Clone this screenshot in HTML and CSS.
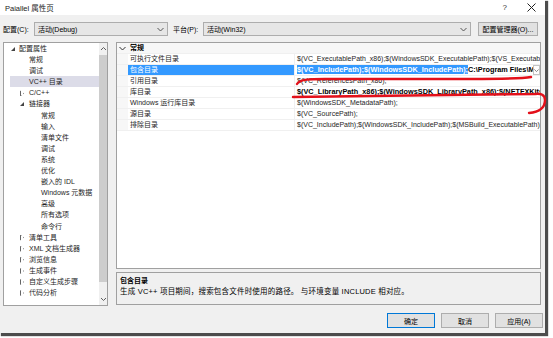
FILE: index.html
```html
<!DOCTYPE html>
<html lang="zh-CN">
<head>
    <meta charset="UTF-8">
    <title>Paiallel 属性页</title>
    <link rel="stylesheet" href="styles.css">
</head>
<body>
    <div class="window">
        <div class="titlebar">
            <span class="title">Paiallel 属性页</span>
            <span class="title-btns">
                <span class="help">?</span>
                <svg class="close" width="9" height="9" viewBox="0 0 9 9"><path d="M0.5 0.5 L8.5 8.5 M8.5 0.5 L0.5 8.5" stroke="#222" stroke-width="1" fill="none"/></svg>
            </span>
        </div>

        <div class="config-row">
            <span class="label">配置(C):</span>
            <div class="combo combo-config">
                <span>活动(Debug)</span>
                <svg width="7" height="5" viewBox="0 0 7 5"><path d="M0.5 1 L3.5 4 L6.5 1" stroke="#555" fill="none"/></svg>
            </div>
            <span class="label label-platform">平台(P):</span>
            <div class="combo combo-platform">
                <span>活动(Win32)</span>
                <svg width="7" height="5" viewBox="0 0 7 5"><path d="M0.5 1 L3.5 4 L6.5 1" stroke="#555" fill="none"/></svg>
            </div>
            <button class="btn btn-manager">配置管理器(O)...</button>
        </div>

        <div class="main">
            <div class="tree">
                <ul class="tree-list">
                    <li class="lvl1"><span class="arrow open"></span>配置属性</li>
                    <li class="lvl2">常规</li>
                    <li class="lvl2">调试</li>
                    <li class="lvl2 selected">VC++ 目录</li>
                    <li class="lvl2"><span class="arrow closed"></span>C/C++</li>
                    <li class="lvl2"><span class="arrow open"></span>链接器</li>
                    <li class="lvl3">常规</li>
                    <li class="lvl3">输入</li>
                    <li class="lvl3">清单文件</li>
                    <li class="lvl3">调试</li>
                    <li class="lvl3">系统</li>
                    <li class="lvl3">优化</li>
                    <li class="lvl3">嵌入的 IDL</li>
                    <li class="lvl3">Windows 元数据</li>
                    <li class="lvl3">高级</li>
                    <li class="lvl3">所有选项</li>
                    <li class="lvl3">命令行</li>
                    <li class="lvl2"><span class="arrow closed"></span>清单工具</li>
                    <li class="lvl2"><span class="arrow closed"></span>XML 文档生成器</li>
                    <li class="lvl2"><span class="arrow closed"></span>浏览信息</li>
                    <li class="lvl2"><span class="arrow closed"></span>生成事件</li>
                    <li class="lvl2"><span class="arrow closed"></span>自定义生成步骤</li>
                    <li class="lvl2"><span class="arrow closed"></span>代码分析</li>
                </ul>
                <div class="vscroll">
                    <svg width="7" height="5" viewBox="0 0 7 5"><path d="M1 4 L3.5 1.5 L6 4" stroke="#606060" fill="none"/></svg>
                    <div class="thumb"></div>
                    <svg width="7" height="5" viewBox="0 0 7 5"><path d="M1 1 L3.5 3.5 L6 1" stroke="#606060" fill="none"/></svg>
                </div>
            </div>

            <div class="right">
                <div class="grid">
                    <div class="grid-row grid-header">
                        <span class="gutter">
                            <svg width="7" height="5" viewBox="0 0 7 5"><path d="M0.5 1 L3.5 4 L6.5 1" stroke="#333" fill="none"/></svg>
                        </span>
                        <span class="header-name">常规</span>
                    </div>
                    <div class="grid-row">
                        <span class="gutter"></span>
                        <span class="name">可执行文件目录</span>
                        <span class="value">$(VC_ExecutablePath_x86);$(WindowsSDK_ExecutablePath);$(VS_Executable</span>
                    </div>
                    <div class="grid-row active">
                        <span class="gutter"></span>
                        <span class="name">包含目录</span>
                        <span class="value bold"><span class="value-sel">$(VC_IncludePath);$(WindowsSDK_IncludePath);</span>C:\Program Files\M</span>
                        <span class="cell-drop">
                            <svg width="7" height="5" viewBox="0 0 7 5"><path d="M0.5 1 L3.5 4 L6.5 1" stroke="#555" fill="none"/></svg>
                        </span>
                    </div>
                    <div class="grid-row">
                        <span class="gutter"></span>
                        <span class="name">引用目录</span>
                        <span class="value">$(VC_ReferencesPath_x86);</span>
                    </div>
                    <div class="grid-row">
                        <span class="gutter"></span>
                        <span class="name">库目录</span>
                        <span class="value bold">$(VC_LibraryPath_x86);$(WindowsSDK_LibraryPath_x86);$(NETFXKitsDi</span>
                    </div>
                    <div class="grid-row">
                        <span class="gutter"></span>
                        <span class="name">Windows 运行库目录</span>
                        <span class="value">$(WindowsSDK_MetadataPath);</span>
                    </div>
                    <div class="grid-row">
                        <span class="gutter"></span>
                        <span class="name">源目录</span>
                        <span class="value">$(VC_SourcePath);</span>
                    </div>
                    <div class="grid-row">
                        <span class="gutter"></span>
                        <span class="name">排除目录</span>
                        <span class="value">$(VC_IncludePath);$(WindowsSDK_IncludePath);$(MSBuild_ExecutablePath);</span>
                    </div>
                </div>
                <div class="desc">
                    <div class="desc-title">包含目录</div>
                    <div class="desc-text">生成 VC++ 项目期间，搜索包含文件时使用的路径。 与环境变量 INCLUDE 相对应。</div>
                </div>
            </div>
        </div>

        <div class="buttons">
            <button class="btn btn-default">确定</button>
            <button class="btn">取消</button>
            <button class="btn">应用(A)</button>
        </div>

        <!-- hand-drawn red marks over the values -->
        <svg class="marks" width="553" height="338" viewBox="0 0 553 338">
            <path d="M297 84 C300 79 310 79 325 79 L470 79 C500 79 520 79 531 77" stroke="#e3101a" stroke-width="2.4" fill="none" stroke-linecap="round"/>
            <path d="M293 97 C350 96 450 95 535 94 C541 93 545 95 545 100 C545 107 540 112 529 113" stroke="#e3101a" stroke-width="2.4" fill="none" stroke-linecap="round"/>
        </svg>
    </div>
</body>
</html>
```

FILE: styles.css
```css
html, body {
    margin: 0;
    padding: 0;
    background-color: #fff;
}
body {
    width: 553px;
    height: 338px;
    overflow: hidden;
    font-family: "Liberation Sans", "Noto Sans CJK SC", sans-serif;
    font-size: 7px;
    color: #000;
}
.window {
    position: relative;
    width: 545px;
    height: 333px;
    background-color: #f0f0f0;
    box-shadow: 2px 2px 1px 1px rgba(0,0,0,0.7);
    display: flex;
    flex-direction: column;
}
.titlebar {
    height: 15px;
    background-color: #fff;
    display: flex;
    align-items: center;
    justify-content: space-between;
    padding: 0 0 0 5px;
}
.title {
    font-size: 7.5px;
    color: #222;
}
.title-btns {
    display: flex;
    align-items: center;
}
.help {
    font-size: 8px;
    color: #333;
    margin-right: 20px;
}
.close {
    margin-right: 9px;
}
.config-row {
    margin-top: 7px;
    height: 14px;
    display: flex;
    align-items: center;
    padding-left: 3px;
}
.label {
    width: 31px;
}
.label-platform {
    width: 30px;
    margin-left: 5px;
}
.combo {
    box-sizing: border-box;
    height: 14px;
    border: 1px solid #adadad;
    background-color: #e6e6e6;
    display: flex;
    align-items: center;
    justify-content: space-between;
    padding: 0 3px 0 3px;
}
.combo-config {
    width: 134px;
}
.combo-platform {
    width: 268px;
}
.btn {
    box-sizing: border-box;
    font-family: inherit;
    font-size: 7px;
    height: 15px;
    width: 48px;
    padding: 0;
    border: 1px solid #adadad;
    background-color: #e1e1e1;
    color: #000;
}
.btn-manager {
    width: 60px;
    height: 14px;
    margin-left: 7px;
}
.btn-default {
    border-color: #0078d7;
}
.main {
    margin-top: 6px;
    display: flex;
    padding-left: 3px;
}
.tree {
    box-sizing: border-box;
    width: 105px;
    height: 264px;
    border: 1px solid #a0a0a0;
    background-color: #fff;
    display: flex;
    overflow: hidden;
}
.tree-list {
    list-style: none;
    margin: 0;
    padding: 0;
    flex: 1;
}
.tree-list li {
    position: relative;
    height: 11.1px;
    line-height: 11.1px;
    white-space: nowrap;
    color: #1e1e1e;
}
.tree-list .lvl1 { padding-left: 15px; }
.tree-list .lvl2 { padding-left: 25px; }
.tree-list .lvl3 { padding-left: 37px; }
.tree-list .selected {
    background-color: #dcdce8;
    margin-left: 6px;
    padding-left: 19px;
}
.arrow {
    position: absolute;
    top: 4px;
    width: 0;
    height: 0;
}
.lvl1 .arrow { left: 7px; }
.lvl2 .arrow { left: 16px; }
.arrow.open {
    top: 4px;
    border-left: 4px solid transparent;
    border-bottom: 4px solid #444;
}
.arrow.closed {
    width: 2px;
    height: 4px;
    border: 1px solid #666;
    clip-path: polygon(0 0, 100% 50%, 0 100%);
    background-color: #fff;
    top: 3px;
}
.vscroll {
    width: 8px;
    background-color: #f0f0f0;
    display: flex;
    flex-direction: column;
    align-items: center;
    padding: 3px 0;
}
.vscroll svg {
    flex: none;
}
.thumb {
    flex: 1;
    width: 8px;
    margin: 4px 0 15px;
    background-color: #cdcdcd;
}
.right {
    margin-left: 8px;
    width: 425px;
    display: flex;
    flex-direction: column;
}
.grid {
    box-sizing: border-box;
    height: 227px;
    border: 1px solid #a0a0a0;
    background-color: #fff;
    overflow: hidden;
}
.grid-row {
    position: relative;
    height: 11px;
    line-height: 10px;
    display: flex;
    border-bottom: 1px solid #f0f0f0;
    box-sizing: border-box;
    white-space: nowrap;
}
.grid-header {
    background-color: #f7f7f7;
}
.gutter {
    width: 11px;
    flex: none;
    background-color: #f7f7f7;
    display: flex;
    align-items: center;
    justify-content: center;
}
.header-name {
    font-weight: bold;
    padding-left: 2px;
}
.name {
    width: 164px;
    flex: none;
    padding-left: 2px;
    border-right: 1px solid #f0f0f0;
    color: #1e1e1e;
}
.value {
    padding-left: 2px;
    color: #1e1e1e;
}
.bold {
    font-weight: bold;
    font-size: 7.3px;
    color: #000;
}
.active .name {
    background-color: #3399ff;
    color: #fff;
}
.value-sel {
    background-color: #3399ff;
    color: #fff;
}
.cell-drop {
    position: absolute;
    right: 0;
    top: 0;
    box-sizing: border-box;
    width: 7px;
    height: 10px;
    border: 1px solid #c4c4c4;
    background-color: #fff;
    display: flex;
    align-items: center;
    justify-content: center;
}
.cell-drop svg {
    width: 5px;
}
.desc {
    box-sizing: border-box;
    margin-top: 3px;
    height: 33px;
    border: 1px solid #a0a0a0;
    padding: 2px 3px;
    line-height: 11px;
}
.desc-title {
    font-weight: bold;
}
.desc-text {
    font-size: 7.5px;
    letter-spacing: 0.2px;
}
.buttons {
    margin-top: 7px;
    display: flex;
    justify-content: flex-end;
    gap: 6px;
    padding-right: 2px;
}
.marks {
    position: absolute;
    left: 0;
    top: 0;
    pointer-events: none;
}
```
